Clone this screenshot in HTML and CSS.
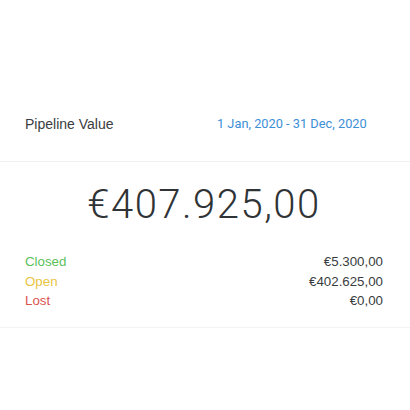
FILE: index.html
```html
<!DOCTYPE html>
<html>
<head>
<meta charset="utf-8">
<link rel="stylesheet" href="styles.css">
</head>
<body>
<div class="card">
  <div class="header">
    <span class="title">Pipeline Value</span>
    <span class="range">1 Jan, 2020 - 31 Dec, 2020</span>
  </div>
  <div class="body">
    <div class="total">€407.925,00</div>
    <div class="rows">
      <div class="row"><span class="label closed">Closed</span><span class="amount">€5.300,00</span></div>
      <div class="row"><span class="label open">Open</span><span class="amount">€402.625,00</span></div>
      <div class="row"><span class="label lost">Lost</span><span class="amount">€0,00</span></div>
    </div>
  </div>
</div>
</body>
</html>
```
FILE: styles.css
```css
html, body {
  margin: 0;
  padding: 0;
  background: #ffffff;
}
body {
  font-family: "Liberation Sans", Arial, sans-serif;
  color: #333638;
}
.card {
  width: 410px;
}
.header {
  height: 162px;
  box-sizing: border-box;
  display: flex;
  align-items: flex-end;
  padding: 0 0 27px 25px;
  border-bottom: 1px solid #f0f0f0;
}
.title {
  font-size: 14px;
  line-height: 20px;
  width: 192px;
  color: #3a3d40;
}
.range {
  font-family: Roboto, "Liberation Sans", sans-serif;
  font-size: 12.8px;
  line-height: 20px;
  color: #3d8fd6;
}
.body {
  border-bottom: 1px solid #f3f3f3;
  padding: 19px 27px 16px 25px;
}
.total {
  font-family: Roboto, "Liberation Sans", sans-serif;
  font-weight: 300;
  font-size: 40px;
  letter-spacing: 1.5px;
  line-height: 48px;
  text-align: center;
  color: #2f3336;
  margin-bottom: 23px;
}
.rows {
  display: flex;
  flex-direction: column;
}
.row {
  display: flex;
  justify-content: space-between;
  font-size: 13.3px;
  line-height: 19.5px;
}
.amount {
  color: #3a3d40;
}
.closed { color: #5cbf5c; }
.open { color: #e9c441; }
.lost { color: #d9534f; }
```
